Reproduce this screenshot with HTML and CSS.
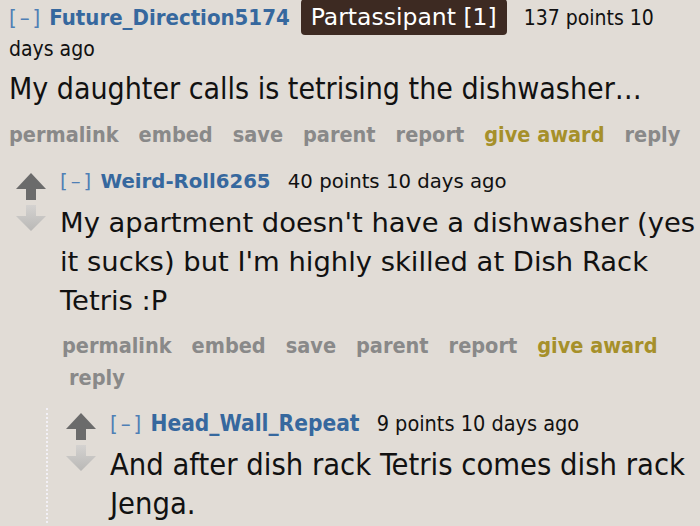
FILE: index.html
```html
<!DOCTYPE html>
<html>
<head>
<meta charset="utf-8">
<link rel="stylesheet" href="styles.css">
</head>
<body>
<div class="thing top">
  <div class="entry">
    <p class="tagline cond"><a class="expand">[–]</a> <a class="author">Future_Direction5174</a> <span class="flair">Partassipant [1]</span> <span class="score">137 points</span> <time>10 days ago</time></p>
    <div class="md cond"><p>My daughter calls is tetrising the dishwasher…</p></div>
    <ul class="buttons cond">
      <li>permalink</li><li>embed</li><li>save</li><li>parent</li><li>report</li><li class="award">give award</li><li>reply</li>
    </ul>
  </div>
  <div class="child">
    <div class="thing">
      <div class="row">
        <div class="midcol">
          <svg class="arrow" width="30" height="27" viewBox="0 0 30 27"><path d="M15 0 L30 16 L20 16 L20 27 L10 27 L10 16 L0 16 Z" fill="#6b6b6b"/></svg>
          <svg class="arrow" width="30" height="26" viewBox="0 0 30 26"><defs><linearGradient id="g1" x1="0" y1="0" x2="0" y2="1"><stop offset="0" stop-color="#d4d2d0"/><stop offset="1" stop-color="#b9b8b6"/></linearGradient></defs><path d="M10 0 L20 0 L20 11 L30 11 L15 26 L0 11 L10 11 Z" fill="url(#g1)"/></svg>
        </div>
        <div class="entry">
          <p class="tagline wide"><a class="expand">[–]</a> <a class="author">Weird-Roll6265</a> <span class="score">40 points</span> <time>10 days ago</time></p>
          <div class="md wide"><p>My apartment doesn't have a dishwasher (yes it sucks) but I'm highly skilled at Dish Rack Tetris :P</p></div>
          <ul class="buttons cond">
            <li>permalink</li><li>embed</li><li>save</li><li>parent</li><li>report</li><li class="award">give award</li><li>reply</li>
          </ul>
        </div>
      </div>
      <div class="child dotted">
        <div class="thing">
          <div class="row">
            <div class="midcol">
              <svg class="arrow" width="30" height="27" viewBox="0 0 30 27"><path d="M15 0 L30 16 L20 16 L20 27 L10 27 L10 16 L0 16 Z" fill="#6b6b6b"/></svg>
              <svg class="arrow" width="30" height="26" viewBox="0 0 30 26"><defs><linearGradient id="g2" x1="0" y1="0" x2="0" y2="1"><stop offset="0" stop-color="#d4d2d0"/><stop offset="1" stop-color="#b9b8b6"/></linearGradient></defs><path d="M10 0 L20 0 L20 11 L30 11 L15 26 L0 11 L10 11 Z" fill="url(#g2)"/></svg>
            </div>
            <div class="entry">
              <p class="tagline cond"><a class="expand">[–]</a> <a class="author">Head_Wall_Repeat</a> <span class="score">9 points</span> <time>10 days ago</time></p>
              <div class="md cond big"><p>And after dish rack Tetris comes dish rack Jenga.</p></div>
            </div>
          </div>
        </div>
      </div>
    </div>
  </div>
</div>
</body>
</html>
```

FILE: styles.css
```css
html, body {
  margin: 0;
  padding: 0;
  background: #e1dcd6;
  color: #111;
  overflow: hidden;
}
body {
  width: 700px;
  height: 526px;
}
.cond { font-family: "DejaVu Sans Condensed", "DejaVu Sans", sans-serif; }
.wide { font-family: "DejaVu Sans", Verdana, sans-serif; }
.top {
  padding: 2px 0 0 9px;
}
.tagline {
  margin: 0;
  font-size: 21px;
  line-height: 31px;
  color: #111;
}
.tagline .author { font-size: 22px; }
.tagline .expand { font-size: 22px; letter-spacing: 3px; }
.tagline.wide, .tagline.wide .author, .tagline.wide .expand { font-size: 19.7px; }
.expand { color: #4f7fb5; }
.author { color: #36689e; font-weight: bold; }
.flair {
  font-family: "DejaVu Sans", Verdana, sans-serif;
  background: #3d2a22;
  color: #fff;
  font-size: 23.5px;
  padding: 4px 10px;
  border-radius: 4px;
  margin: 0 0 0 5px;
}
.score { margin-left: 11px; }
.md { margin-top: 4px; }
.md p {
  margin: 0;
  font-size: 30px;
  line-height: 39px;
}
.md.wide p { font-size: 27.4px; }
.md.big p { font-size: 30.6px; }
.buttons {
  list-style: none;
  margin: 11px 0 0 0;
  padding: 0;
  display: flex;
  flex-wrap: wrap;
  font-size: 21.5px;
  font-weight: bold;
  line-height: 31px;
  color: #898989;
}
.buttons li {
  padding-left: 7px;
  margin-right: 13px;
}
.buttons li:first-child { padding-left: 0; }
.buttons li:last-child { margin-right: 0; }
.buttons .award { color: #a6902a; }
.child {
  margin-top: 16px;
}
.row {
  display: flex;
  align-items: flex-start;
}
.midcol {
  width: 30px;
  margin-left: 7px;
  margin-right: 14px;
  display: flex;
  flex-direction: column;
  gap: 5px;
  padding-top: 7px;
}
.arrow { display: block; }
.row .entry { flex: 1; min-width: 0; }
.row .md { margin-top: 6px; }
.row .buttons { margin-top: 10px; padding-left: 2px; line-height: 32px; }
.dotted {
  margin-left: 37px;
  margin-top: 14px;
  border-left: 2px dotted #f2f0f6;
}
.dotted .midcol { margin-left: 18px; padding-top: 5px; }
.dotted .tagline { font-size: 21.5px; }
.dotted .tagline .author { font-size: 22.5px; }
```
